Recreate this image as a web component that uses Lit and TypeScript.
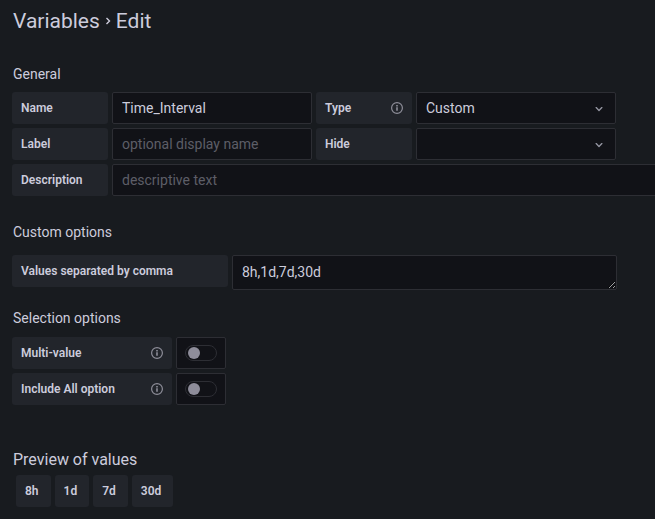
import { LitElement, html, css, svg } from "lit";
import { customElement } from "lit/decorators.js";

const infoIcon = html`<svg class="info" viewBox="0 0 14 14" aria-hidden="true">
  ${svg`<circle cx="7" cy="7" r="5.4" fill="none" stroke="currentColor" stroke-width="1.2"/>
  <path fill="currentColor" d="M6.2 4h1.6v1.5H6.2ZM6.2 6.3h1.6v3.5H6.2Z"/>`}
</svg>`;

const chevron = html`<svg class="chevron" viewBox="0 0 24 24" aria-hidden="true">
  ${svg`<path fill="currentColor" d="M17 9.17a1 1 0 0 0-1.41 0L12 12.71 8.46 9.17a1 1 0 0 0-1.41 1.42l4.24 4.24a1 1 0 0 0 1.42 0L17 10.59a1 1 0 0 0 0-1.42Z"/>`}
</svg>`;

@customElement("app-root")
export class AppRoot extends LitElement {
  static styles = css`
    :host {
      display: block;
      box-sizing: border-box;
      min-height: 100vh;
      padding: 9px 0 12px 12px;
      overflow: hidden;
      background: #181b1f;
      color: #ccccdc;
      font: 400 14px/20px Roboto, sans-serif;
    }
    *,
    *::before {
      box-sizing: border-box;
    }
    h1,
    h2,
    h3 {
      margin: 0;
      padding-left: 1px;
      font-weight: 400;
    }
    h1 {
      display: flex;
      align-items: center;
      gap: 4px;
      margin-bottom: 31px;
      font-size: 21px;
      line-height: 24px;
    }
    h1 a {
      color: inherit;
      text-decoration: none;
    }
    .separator {
      width: 8px;
      height: 8px;
    }
    h2 {
      margin-bottom: 8px;
      font-size: 14px;
      line-height: 20px;
    }
    h3 {
      margin-bottom: 3px;
      font-size: 16px;
      line-height: 24px;
    }
    section {
      display: flex;
      flex-direction: column;
    }
    .general {
      margin-bottom: 26px;
    }
    .custom {
      margin-bottom: 18px;
    }
    .custom h2 {
      margin-bottom: 13px;
    }
    .selection h2 {
      margin-bottom: 9px;
    }
    .selection {
      margin-bottom: 43px;
    }
    .rows {
      display: flex;
      flex-direction: column;
      gap: 4px;
    }
    .row {
      display: flex;
      align-items: flex-start;
      gap: 4px;
    }
    .label {
      display: flex;
      flex: none;
      align-items: center;
      justify-content: space-between;
      width: 96px;
      height: 32px;
      padding: 0 8px 0 9px;
      border-radius: 3px;
      background: #22252b;
      font-size: 12px;
      font-weight: 600;
    }
    .label.medium {
      width: 160px;
    }
    .label.wide {
      width: 216px;
    }
    .info {
      width: 14px;
      height: 14px;
      color: #8e8e99;
    }
    .field {
      display: block;
      flex: none;
      width: 200px;
      height: 32px;
      margin: 0;
      padding: 0 9px;
      border: 1px solid #2d2e34;
      border-radius: 2px;
      outline: none;
      background: #111217;
      color: #ccccdc;
      font: inherit;
    }
    .field:focus-visible {
      border-color: #3d71d9;
    }
    .field::placeholder {
      color: #5d5e67;
      opacity: 1;
    }
    .field.long {
      flex: 1 0 600px;
    }
    .select {
      position: relative;
      flex: none;
    }
    .select .field {
      appearance: none;
    }
    .chevron {
      position: absolute;
      top: 9px;
      right: 9px;
      width: 16px;
      height: 16px;
      color: #9596a2;
      pointer-events: none;
    }
    textarea.field {
      width: 385px;
      height: 35px;
      padding: 6px 9px;
      resize: both;
      color-scheme: dark;
    }
    .toggle {
      display: flex;
      align-items: center;
      justify-content: center;
      width: 50px;
      height: 32px;
      border: 1px solid #2d2e34;
      border-radius: 2px;
      background: #111217;
    }
    .toggle input {
      display: flex;
      align-items: center;
      appearance: none;
      width: 32px;
      height: 16px;
      margin: 0;
      padding: 0 2px;
      border: 1px solid #2d2e34;
      border-radius: 8px;
      background: #111217;
    }
    .toggle input::before {
      content: "";
      width: 12px;
      height: 12px;
      border-radius: 50%;
      background: #8e8d9a;
    }
    .toggle input:checked {
      justify-content: flex-end;
      background: #3d71d9;
    }
    .values {
      display: flex;
      gap: 4px;
      margin: 0;
      padding: 0 4px;
      list-style: none;
    }
    .values .label {
      width: auto;
      padding-right: 12px;
    }
  `;

  private toggleRow(id: string, text: string) {
    return html`<div class="row">
      <label class="label medium" for=${id}>${text}${infoIcon}</label>
      <div class="toggle"><input id=${id} type="checkbox" role="switch" /></div>
    </div>`;
  }

  render() {
    return html`
      <h1>
        <a href="#variables">Variables</a>
        <svg class="separator" viewBox="0 0 8 8" aria-hidden="true">
          <path d="M2.5 1 5.5 4 2.5 7" fill="none" stroke="currentColor" stroke-width="1.4" />
        </svg>
        <span>Edit</span>
      </h1>
      <section class="general">
        <h2>General</h2>
        <div class="rows">
          <div class="row">
            <label class="label" for="name">Name</label>
            <input class="field" id="name" type="text" value="Time_Interval" />
            <label class="label" for="type">Type${infoIcon}</label>
            <div class="select">
              <select class="field" id="type">
                <option>Custom</option>
              </select>
              ${chevron}
            </div>
          </div>
          <div class="row">
            <label class="label" for="label">Label</label>
            <input class="field" id="label" type="text" placeholder="optional display name" />
            <label class="label" for="hide">Hide</label>
            <div class="select">
              <select class="field" id="hide">
                <option></option>
              </select>
              ${chevron}
            </div>
          </div>
          <div class="row">
            <label class="label" for="description">Description</label>
            <input class="field long" id="description" type="text" placeholder="descriptive text" />
          </div>
        </div>
      </section>
      <section class="custom">
        <h2>Custom options</h2>
        <div class="row">
          <label class="label wide" for="options">Values separated by comma</label>
          <textarea class="field" id="options" rows="1" .value=${"8h,1d,7d,30d"}></textarea>
        </div>
      </section>
      <section class="selection">
        <h2>Selection options</h2>
        <div class="rows">
          ${this.toggleRow("multi", "Multi-value")}
          ${this.toggleRow("all", "Include All option")}
        </div>
      </section>
      <section>
        <h3>Preview of values</h3>
        <ul class="values">
          ${["8h", "1d", "7d", "30d"].map((v) => html`<li class="label">${v}</li>`)}
        </ul>
      </section>
    `;
  }
}
